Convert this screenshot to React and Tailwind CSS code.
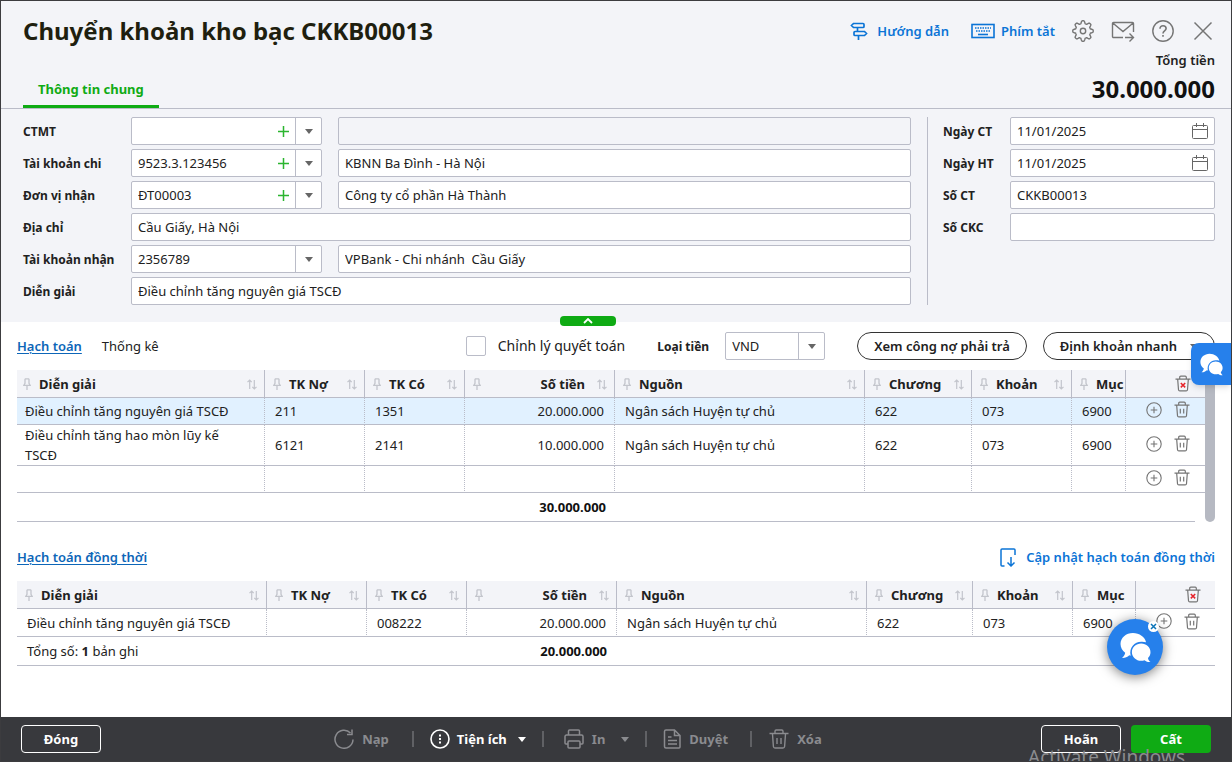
import React, { useState } from 'react';
import clsx from 'clsx';

const COLUMNS = [
    { key: 'desc', label: 'Diễn giải' },
    { key: 'debit', label: 'TK Nợ' },
    { key: 'credit', label: 'TK Có' },
    { key: 'amount', label: 'Số tiền', right: true },
    { key: 'source', label: 'Nguồn' },
    { key: 'chapter', label: 'Chương' },
    { key: 'clause', label: 'Khoản' },
    { key: 'item', label: 'Mục', noSort: true },
];

const ENTRIES = [
    { desc: 'Điều chỉnh tăng nguyên giá TSCĐ', debit: '211', credit: '1351', amount: '20.000.000', source: 'Ngân sách Huyện tự chủ', chapter: '622', clause: '073', item: '6900' },
    { desc: 'Điều chỉnh tăng hao mòn lũy kế TSCĐ', debit: '6121', credit: '2141', amount: '10.000.000', source: 'Ngân sách Huyện tự chủ', chapter: '622', clause: '073', item: '6900' },
    {},
];

const PARALLEL_ENTRIES = [
    { desc: 'Điều chỉnh tăng nguyên giá TSCĐ', credit: '008222', amount: '20.000.000', source: 'Ngân sách Huyện tự chủ', chapter: '622', clause: '073', item: '6900' },
];

// Eight rounded teeth around a 22px circle
const GEAR_POINTS = Array.from({ length: 128 }, (_, i) => {
    const angle = (i / 128) * Math.PI * 2;
    const wave = Math.max(-1, Math.min(1, Math.cos(angle * 8) * 1.6));
    const r = 8.9 + wave * 1.3;
    return `${(11 + r * Math.cos(angle)).toFixed(2)},${(11 + r * Math.sin(angle)).toFixed(2)}`;
}).join(' ');

const Svg = ({ w, h, children, className, sw = 1.3 }) => (
    <svg
        width={w}
        height={h}
        viewBox={`0 0 ${w} ${h}`}
        fill="none"
        stroke="currentColor"
        strokeWidth={sw}
        className={clsx('shrink-0', className)}
        aria-hidden="true"
    >
        {children}
    </svg>
);

const PinIcon = () => (
    <Svg w={8} h={12} className="text-[#c3c5cc]">
        <path d="M2 .8h4M2 .8v4.5L.8 7.4h6.4L6 5.3V.8M4 7.4V12" />
    </Svg>
);

const SortIcon = () => (
    <Svg w={10} h={11} className="text-[#c3c5cc]" sw={1.2}>
        <path d="M2.7 10V1M.5 3.2 2.7 1l2 2.2M7.3 1v9M5.3 7.8l2 2.2 2.2-2.2" />
    </Svg>
);

const CaretIcon = ({ className }) => (
    <svg width="8" height="5" viewBox="0 0 8 5" fill="currentColor" className={clsx('shrink-0', className)} aria-hidden="true">
        <path d="M0 0h8L4 5z" />
    </svg>
);

const PlusCircleIcon = () => (
    <Svg w={16} h={16} sw={1.1}>
        <circle cx="8" cy="8" r="7.2" />
        <path d="M8 4.7v6.6M4.7 8h6.6" />
    </Svg>
);

const TrashIcon = ({ marked }) => (
    <Svg w={16} h={17} sw={1.2}>
        <path d="M.5 4.2h15M4.7 4V2.2c0-.7.4-1.1 1.1-1.1h4.4c.7 0 1.1.4 1.1 1.1V4M2.7 4.5l.8 10.2c.1.8.5 1.2 1.3 1.2h6.4c.8 0 1.2-.4 1.3-1.2l.8-10.2" />
        {marked ? (
            <path d="m5.8 8 4.4 4.4M10.2 8l-4.4 4.4" stroke="#e5252c" strokeWidth="1.5" />
        ) : (
            <path d="M6.3 7.8v4.6M9.7 7.8v4.6" />
        )}
    </Svg>
);

const CalendarIcon = () => (
    <Svg w={17} h={17} sw={1}>
        <rect x=".5" y="2.5" width="15" height="13" rx="1" />
        <path d="M.5 6.5h15M4.5 0v4M11.5 0v4" />
    </Svg>
);

const ChatIcon = ({ size }) => (
    <svg width={size} height={size} viewBox="0 0 30 30" fill="currentColor" aria-hidden="true">
        <path d="M12.5 1C5.8 1 .5 5.7.5 11.6c0 3.5 1.8 6.5 4.5 8.5C4.7 22 3.7 23.8 2 25.2c2.6.2 5-.8 7-2.6l1.3.3C8.6 15 14 9.6 20.5 9.4c1.6-.1 3.2.1 4.7.6C24.2 4.8 18.8 1 12.5 1z" />
        <path d="M20.5 11.2c-5 0-9 3.700-9 8.300s4 8.300 9 8.300c1.100 0 2.200-.2 3.200-.5 1.700 1.400 3.700 2 5.800 1.800-1.400-1.200-2.200-2.500-2.400-4 1.500-1.500 2.400-3.400 2.400-5.600 0-4.600-4-8.300-9-8.300z" />
    </svg>
);

const FIELD = 'h-7 w-full min-w-0 rounded-xs border border-[#babcc8] bg-white px-1.5 text-[13px] text-[#212121] outline-none focus:border-[#0fab14] disabled:bg-[#f3f4f8]';

const Label = ({ htmlFor, children }) => (
    <label htmlFor={htmlFor} className="pt-px text-[12px] font-bold whitespace-nowrap text-[#212121]">
        {children}
    </label>
);

const Combo = ({ id, value, addable, label }) => (
    <div className="relative">
        <select id={id} aria-label={label} defaultValue={value} className={clsx(FIELD, 'appearance-none pr-12')}>
            <option value={value}>{value}</option>
        </select>
        {addable && (
            <button type="button" aria-label="Thêm" className="absolute top-2 right-8 text-[#2bb52f]">
                <Svg w={13} h={13} sw={1.5}>
                    <path d="M6.5 1v11M1 6.5h11" />
                </Svg>
            </button>
        )}
        <span className="pointer-events-none absolute inset-y-0 right-0 flex w-[27px] items-center justify-center border-l border-[#babcc8] text-[#666]">
            <CaretIcon />
        </span>
    </div>
);

const DateField = ({ id, value }) => (
    <div className="relative">
        <input id={id} type="text" defaultValue={value} className={clsx(FIELD, 'pr-8')} />
        <button type="button" aria-label="Chọn ngày" className="absolute top-1.5 right-1.5 text-[#666]">
            <CalendarIcon />
        </button>
    </div>
);

const EntryTable = ({ rows, widths, selected, rowHeight, firstPad, children }) => (
    <table className="w-full table-fixed border-separate border-spacing-0 text-[13px] text-[#212121]">
        <colgroup>
            {widths.map((w, i) => <col key={i} className={w} />)}
        </colgroup>
        <thead>
            <tr className="bg-[#f3f4f8]">
                {COLUMNS.map((col, i) => (
                    <th key={col.key} scope="col" className="border-r border-b border-[#babcc8] p-0 font-bold">
                        <div className={clsx('flex h-[27px] items-center gap-2 overflow-hidden pt-px pr-[7px]', i === 0 ? firstPad.head : 'pl-2')}>
                            <PinIcon />
                            <span className={clsx('flex-1 whitespace-nowrap', col.right ? 'pr-1 text-right' : 'text-left')}>{col.label}</span>
                            {!col.noSort && <SortIcon />}
                        </div>
                    </th>
                ))}
                <th scope="col" className="border-b border-[#babcc8] p-0">
                    <div className="flex justify-end pr-3.5 text-[#757575]">
                        <button type="button" aria-label="Xóa tất cả"><TrashIcon marked /></button>
                    </div>
                </th>
            </tr>
        </thead>
        <tbody>
            {rows.map((row, r) => (
                <tr key={r} className={clsx(rowHeight, r === selected && 'bg-[#e1f1ff]')}>
                    {COLUMNS.map((col, i) => (
                        <td
                            key={col.key}
                            className={clsx(
                                'border-r border-b border-[#babcc8] py-0 pr-2.5 leading-5 [border-right-style:dotted]',
                                i === 0 ? firstPad.body : 'pl-2.5',
                                col.right && 'text-right'
                            )}
                        >
                            {row[col.key]}
                        </td>
                    ))}
                    <td className="border-b border-[#babcc8] py-0 pr-[15px] pl-0">
                        <div className="flex items-center justify-end gap-3 pb-[3px] text-[#757575]">
                            <button type="button" aria-label="Thêm dòng"><PlusCircleIcon /></button>
                            <button type="button" aria-label="Xóa dòng"><TrashIcon /></button>
                        </div>
                    </td>
                </tr>
            ))}
        </tbody>
        <tfoot>{children}</tfoot>
    </table>
);

const ICON_BUTTON = 'flex w-10 items-center justify-center';

const Header = () => (
    <header className="flex justify-between border-b border-[#babcc8] pr-4 pl-[22px]">
        <div className="flex flex-col justify-between">
            <h1 className="pt-3 text-[24px] leading-9 font-bold text-[#1f1f0f]">Chuyển khoản kho bạc CKKB00013</h1>
            <button type="button" className="h-9 self-start border-b-3 border-[#0fab14] px-[15px] text-[13px] font-bold text-[#0fab14]">
                Thông tin chung
            </button>
        </div>
        <div className="flex flex-col items-end pt-4">
            <div className="-mr-2 flex h-7 items-center text-[#757575]">
                <a href="#guide" className="mr-[22px] flex items-center gap-2 text-[13px] font-semibold text-[#0b74d6]">
                    <Svg w={20} h={20} sw={1.7}>
                        <path d="M4.5 2.5H14a1 1 0 0 1 1 1v2a1 1 0 0 1-1 1H4.5l-2-2zM8.5 6.5v4M15.5 10.5H6a1 1 0 0 0-1 1v2a1 1 0 0 0 1 1h9.5l2-2zM9.5 14.5v4.5" />
                    </Svg>
                    Hướng dẫn
                </a>
                <a href="#shortcuts" className="mr-2 flex items-center gap-1.5 text-[13px] font-semibold text-[#0b74d6]">
                    <Svg w={24} h={16} sw={1.6}>
                        <rect x="1" y="1.5" width="22" height="13" />
                        <path d="M4 5h16M5 8h14" strokeDasharray="1.5 1" strokeWidth="1.5" />
                        <path d="M7 11.5h10" />
                    </Svg>
                    Phím tắt
                </a>
                <button type="button" aria-label="Thiết lập" className={ICON_BUTTON}>
                    <Svg w={22} h={22} sw={1.4}>
                        <polygon points={GEAR_POINTS} strokeLinejoin="round" />
                        <circle cx="11" cy="11" r="2.7" />
                    </Svg>
                </button>
                <button type="button" aria-label="Gửi thư" className={ICON_BUTTON}>
                    <Svg w={24} h={22} sw={1.4}>
                        <path d="M12 17.500H2.500a1 1 0 0 1-1-1v-13a1 1 0 0 1 1-1h19a1 1 0 0 1 1 1V12M1.800 3l10.200 8.500L22.200 3M14 17.500h8.500M18.500 13.500l4 4-4 4" />
                    </Svg>
                </button>
                <button type="button" aria-label="Trợ giúp" className={ICON_BUTTON}>
                    <Svg w={22} h={22} sw={1.4}>
                        <circle cx="11" cy="11" r="10.2" />
                        <path d="M8 8.7c0-1.900 1.300-3 3-3s3.100 1.100 3.100 2.800c0 2.400-3.100 2.400-3.100 4.900M11 15v1.700" strokeWidth="1.6" />
                    </Svg>
                </button>
                <button type="button" aria-label="Đóng cửa sổ" className={ICON_BUTTON}>
                    <Svg w={20} h={20} sw={1.5}>
                        <path d="m1.5 1.5 17 17M18.5 1.5l-17 17" />
                    </Svg>
                </button>
            </div>
            <p className="mt-[5px] text-[13px] leading-5 font-semibold text-[#212121]">Tổng tiền</p>
            <p className="text-[24px] leading-[38px] font-bold text-[#111]">30.000.000</p>
        </div>
    </header>
);

const VoucherForm = () => (
    <section className="flex pt-2 pr-4 pb-[17px] pl-[22px]">
        <div className="grid flex-1 grid-cols-[108px_191px_1fr] items-center gap-y-1">
            <Label htmlFor="ctmt">CTMT</Label>
            <Combo id="ctmt" value="" addable />
            <div className="pl-4"><input type="text" disabled aria-label="Tên CTMT" className={FIELD} /></div>

            <Label htmlFor="payAccount">Tài khoản chi</Label>
            <Combo id="payAccount" value="9523.3.123456" addable />
            <div className="pl-4"><input type="text" aria-label="Kho bạc" defaultValue="KBNN Ba Đình - Hà Nội" className={FIELD} /></div>

            <Label htmlFor="receiver">Đơn vị nhận</Label>
            <Combo id="receiver" value="ĐT00003" addable />
            <div className="pl-4"><input type="text" aria-label="Tên đơn vị" defaultValue="Công ty cổ phần Hà Thành" className={FIELD} /></div>

            <Label htmlFor="address">Địa chỉ</Label>
            <input id="address" type="text" defaultValue="Cầu Giấy, Hà Nội" className={clsx(FIELD, 'col-span-2')} />

            <Label htmlFor="receiveAccount">Tài khoản nhận</Label>
            <Combo id="receiveAccount" value="2356789" />
            <div className="pl-4"><input type="text" aria-label="Ngân hàng" defaultValue="VPBank - Chi nhánh  Cầu Giấy" className={FIELD} /></div>

            <Label htmlFor="note">Diễn giải</Label>
            <input id="note" type="text" defaultValue="Điều chỉnh tăng nguyên giá TSCĐ" className={clsx(FIELD, 'col-span-2')} />
        </div>
        <div className="ml-4 grid w-[288px] grid-cols-[67px_1fr] content-start items-center gap-y-1 border-l border-[#babcc8] pl-[15px]">
            <Label htmlFor="voucherDate">Ngày CT</Label>
            <DateField id="voucherDate" value="11/01/2025" />
            <Label htmlFor="postDate">Ngày HT</Label>
            <DateField id="postDate" value="11/01/2025" />
            <Label htmlFor="voucherNo">Số CT</Label>
            <input id="voucherNo" type="text" defaultValue="CKKB00013" className={FIELD} />
            <Label htmlFor="ckcNo">Số CKC</Label>
            <input id="ckcNo" type="text" className={FIELD} />
        </div>
    </section>
);

const PILL = 'flex h-7 items-center rounded-full border border-[#333] bg-white px-4 text-[13px] font-semibold whitespace-nowrap text-[#212121]';

const Toolbar = ({ tab, setTab }) => (
    <div className="flex items-center justify-between">
        <nav className="flex gap-5 text-[13px]">
            {['Hạch toán', 'Thống kê'].map((name) => (
                <button
                    key={name}
                    type="button"
                    onClick={() => setTab(name)}
                    className={clsx(tab === name ? 'font-semibold text-[#0d66b8] underline underline-offset-2' : 'text-[#212121]')}
                >
                    {name}
                </button>
            ))}
        </nav>
        <div className="flex items-center">
            <div className="mr-8 flex items-center text-[14px] text-[#212121]">
                <input id="adjust" type="checkbox" className="size-5 appearance-none rounded-xs border border-[#babcc8] bg-white checked:bg-[#0fab14]" />
                <label htmlFor="adjust" className="pl-3">Chỉnh lý quyết toán</label>
            </div>
            <Label htmlFor="currency">Loại tiền</Label>
            <div className="mr-8 ml-4 w-[100px]"><Combo id="currency" value="VND" /></div>
            <button type="button" className={clsx(PILL, 'mr-4')}>Xem công nợ phải trả</button>
            <button type="button" className={clsx(PILL, 'gap-[13px]')}>
                Định khoản nhanh
                <CaretIcon className="text-[#666]" />
            </button>
        </div>
    </div>
);

const Divider = () => <span className="h-4 w-0.5 bg-[#606165]" />;

const FooterBar = () => (
    <footer className="flex h-11 items-center justify-between bg-[#38393d] px-5 text-[13px] font-bold text-[#8a8b8f]">
        <button type="button" className="h-7 w-20 rounded-sm border border-white text-white">Đóng</button>
        <div className="ml-3.5 flex items-center">
            <button type="button" className="mr-[23px] flex items-center gap-2">
                <Svg w={20} h={20} sw={1.5}>
                    <path d="M19 10.5A9 9 0 1 1 16.5 4M18 .5V5.5h-5" />
                </Svg>
                Nạp
            </button>
            <Divider />
            <button type="button" className="mx-4 flex items-center gap-[7px] text-white">
                <Svg w={20} h={20} sw={1.6}>
                    <circle cx="10" cy="10" r="9" />
                    <path d="M10 5.5v2M10 9v2M10 12.5v2" strokeWidth="2" />
                </Svg>
                Tiện ích
                <CaretIcon className="ml-1" />
            </button>
            <Divider />
            <button type="button" className="mr-4 ml-5 flex items-center gap-2">
                <Svg w={20} h={20} sw={1.5}>
                    <path d="M4.5 6V2a1 1 0 0 1 1-1h9a1 1 0 0 1 1 1v4M4 15H2a1 1 0 0 1-1-1V7.5A1.5 1.5 0 0 1 2.500 6h15A1.500 1.500 0 0 1 19 7.500V14a1 1 0 0 1-1 1h-2" />
                    <rect x="4" y="12" width="12" height="7" rx="1" />
                </Svg>
                In
                <CaretIcon className="ml-2" />
            </button>
            <Divider />
            <button type="button" className="mr-[22px] ml-4 flex items-center gap-2">
                <Svg w={18} h={20} sw={1.5}>
                    <path d="M3 1h8.500L17 6.500V18a1 1 0 0 1-1 1H3a1.500 1.500 0 0 1-1.500-1.500v-15A1.500 1.500 0 0 1 3 1zM11.500 1v5.500H17M5 8h3.500M5 11.500h9M5 15h9" />
                </Svg>
                Duyệt
            </button>
            <Divider />
            <button type="button" className="ml-[17px] flex items-center gap-2">
                <Svg w={20} h={20} sw={1.4}>
                    <path d="M.5 4.500h19M6 4.500V2.200C6 1.400 6.400 1 7.200 1h5.600c.8 0 1.200.4 1.200 1.200v2.300M3.500 5l.9 12.500c.1 1 .6 1.500 1.600 1.500h8c1 0 1.500-.5 1.600-1.500L16.500 5M8 9v6M12 9v6" />
                </Svg>
                Xóa
            </button>
        </div>
        <div className="flex gap-2.5 text-white">
            <button type="button" className="h-7 w-20 rounded-sm border border-white">Hoãn</button>
            <button type="button" className="h-7 w-20 rounded-sm bg-[#0fab14]">Cất</button>
        </div>
    </footer>
);

export default function App() {
    const [tab, setTab] = useState('Hạch toán');
    const [collapsed, setCollapsed] = useState(false);

    return (
        <div className="relative flex min-h-screen flex-col overflow-hidden border border-[#3c3c3f] bg-white font-['Noto_Sans',sans-serif] leading-5">
            <div className="relative bg-[#f3f4f8]">
                <Header />
                {!collapsed && <VoucherForm />}
                <button
                    type="button"
                    aria-label="Thu gọn"
                    onClick={() => setCollapsed(!collapsed)}
                    className="absolute -bottom-1 left-[559px] flex h-2.5 w-14 items-center justify-center rounded bg-[#0fab14] text-white"
                >
                    <Svg w={10} h={6} sw={1.8}>
                        <path d="M1 5l4-4 4 4" />
                    </Svg>
                </button>
            </div>

            <main className="flex-1 px-4 pt-2.5">
                <Toolbar tab={tab} setTab={setTab} />

                <div className="mt-2.5 flex">
                    <div className="min-w-0 flex-1">
                        <EntryTable
                            rows={ENTRIES}
                            selected={0}
                            rowHeight="h-[27px]"
                            widths={['', 'w-[100px]', 'w-[100px]', 'w-[150px]', 'w-[250px]', 'w-[107px]', 'w-[100px]', 'w-[54px]', 'w-[79px]']}
                            firstPad={{ head: 'pl-1.5', body: 'pl-2' }}
                        >
                            <tr className="font-bold text-[#111]">
                                <td colSpan={3} className="h-[29px] border-b border-[#babcc8]" />
                                <td className="border-b border-[#babcc8] py-0 pr-[9px] text-right">30.000.000</td>
                                <td colSpan={4} className="border-b border-[#babcc8]" />
                                <td className="p-0"><div className="mr-2.5 h-[29px] border-b border-[#babcc8]" /></td>
                            </tr>
                        </EntryTable>
                    </div>
                    <div className="w-2.5 rounded-b-full bg-[#b6b9c2]" />
                </div>

                <div className="mt-[25px] mb-3.5 flex items-center justify-between text-[13px] font-semibold">
                    <a href="#parallel" className="text-[#0d66b8] underline underline-offset-2">Hạch toán đồng thời</a>
                    <button type="button" className="flex items-center gap-2.5 text-[#0b74d6]">
                        <Svg w={16} h={19} sw={1.5}>
                            <path d="M4.5 18H2a1 1 0 0 1-1-1V2a1 1 0 0 1 1-1h12a1 1 0 0 1 1 1v5M11 9v9M7.5 14.5 11 18l3.5-3.5" />
                        </Svg>
                        Cập nhật hạch toán đồng thời
                    </button>
                </div>

                <EntryTable
                    rows={PARALLEL_ENTRIES}
                    rowHeight="h-7"
                    widths={['', 'w-[100px]', 'w-[100px]', 'w-[150px]', 'w-[250px]', 'w-[106px]', 'w-[100px]', 'w-[63px]', 'w-[79px]']}
                    firstPad={{ head: 'pl-2', body: 'pl-2.5' }}
                >
                    <tr>
                        <td colSpan={3} className="h-[29px] border-b border-[#babcc8] py-0 pl-2.5">
                            Tổng số: <b>1</b> bản ghi
                        </td>
                        <td className="border-b border-[#babcc8] py-0 pr-2.5 text-right font-bold text-[#111]">20.000.000</td>
                        <td colSpan={5} className="border-b border-[#babcc8]" />
                    </tr>
                </EntryTable>
            </main>

            <FooterBar />

            {/* Support chat shortcuts float over the page */}
            <button type="button" aria-label="Trò chuyện" className="absolute top-[342px] right-0 flex h-[42px] w-10 items-center justify-center rounded-l-lg bg-[#2680eb] text-white shadow-md">
                <ChatIcon size={23} />
            </button>
            <div className="absolute right-[68px] bottom-[86px]">
                <button type="button" aria-label="Hỗ trợ" className="flex size-14 items-center justify-center rounded-full bg-[#2680eb] text-white shadow-[0_2px_12px_rgba(0,0,0,0.5)]">
                    <ChatIcon size={31} />
                </button>
                <button type="button" aria-label="Ẩn hỗ trợ" className="absolute top-0.5 right-1 flex size-[11px] items-center justify-center rounded-full bg-white text-[#0b74b8]">
                    <Svg w={7} h={7} sw={1.5}>
                        <path d="m1 1 5 5M6 1 1 6" />
                    </Svg>
                </button>
            </div>
            <p className="pointer-events-none absolute right-[46px] -bottom-2 text-[19px] leading-6 text-[#8b8c8f]">Activate Windows</p>
        </div>
    );
}
